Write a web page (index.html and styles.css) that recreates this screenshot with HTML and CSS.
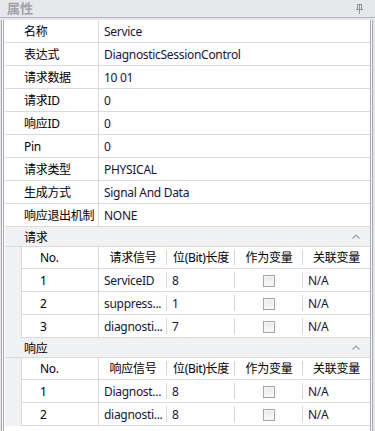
FILE: index.html
```html
<!DOCTYPE html>
<html lang="zh-CN">
<head>
    <meta charset="UTF-8">
    <meta name="viewport" content="width=device-width, initial-scale=1.0">
    <title>属性</title>
    <link rel="stylesheet" href="styles.css">
</head>
<body>
    <div class="titlebar">
        <span class="title">属性</span>
        <svg class="pin" width="7" height="10" viewBox="0 0 7 10">
            <rect x="1.5" y="0.5" width="4" height="5" fill="none" stroke="#8e9199"/>
            <rect x="3" y="1" width="1" height="4" fill="#8e9199"/>
            <rect x="0" y="5" width="7" height="1" fill="#8e9199"/>
            <rect x="3" y="6" width="1" height="4" fill="#8e9199"/>
        </svg>
    </div>
    <div class="panel">
        <div class="prop"><div class="label">名称</div><div class="value">Service</div></div>
        <div class="prop"><div class="label">表达式</div><div class="value">DiagnosticSessionControl</div></div>
        <div class="prop"><div class="label">请求数据</div><div class="value">10 01</div></div>
        <div class="prop"><div class="label">请求ID</div><div class="value">0</div></div>
        <div class="prop"><div class="label">响应ID</div><div class="value">0</div></div>
        <div class="prop"><div class="label">Pin</div><div class="value">0</div></div>
        <div class="prop"><div class="label">请求类型</div><div class="value">PHYSICAL</div></div>
        <div class="prop"><div class="label">生成方式</div><div class="value">Signal And Data</div></div>
        <div class="prop"><div class="label">响应退出机制</div><div class="value">NONE</div></div>

        <div class="section">
            <span>请求</span>
            <svg class="chevron" width="8" height="5" viewBox="0 0 8 5"><path d="M0.5 4.5 L4 1 L7.5 4.5" fill="none" stroke="#9a9ca2" stroke-width="1.2"/></svg>
        </div>
        <div class="indent">
            <div class="subtable">
                <div class="trow head">
                    <div class="cell no">No.</div>
                    <div class="cell sep">请求信号</div>
                    <div class="cell sep">位(Bit)长度</div>
                    <div class="cell sep">作为变量</div>
                    <div class="cell">关联变量</div>
                </div>
                <div class="trow">
                    <div class="cell no">1</div>
                    <div class="cell sep txt">ServiceID</div>
                    <div class="cell sep txt">8</div>
                    <div class="cell sep"><span class="check"></span></div>
                    <div class="cell txt">N/A</div>
                </div>
                <div class="trow">
                    <div class="cell no">2</div>
                    <div class="cell sep txt">suppress...</div>
                    <div class="cell sep txt">1</div>
                    <div class="cell sep"><span class="check"></span></div>
                    <div class="cell txt">N/A</div>
                </div>
                <div class="trow">
                    <div class="cell no">3</div>
                    <div class="cell sep txt">diagnosti...</div>
                    <div class="cell sep txt">7</div>
                    <div class="cell sep"><span class="check"></span></div>
                    <div class="cell txt">N/A</div>
                </div>
            </div>
        </div>

        <div class="section">
            <span>响应</span>
            <svg class="chevron" width="8" height="5" viewBox="0 0 8 5"><path d="M0.5 4.5 L4 1 L7.5 4.5" fill="none" stroke="#9a9ca2" stroke-width="1.2"/></svg>
        </div>
        <div class="indent">
            <div class="subtable">
                <div class="trow head">
                    <div class="cell no">No.</div>
                    <div class="cell sep">响应信号</div>
                    <div class="cell sep">位(Bit)长度</div>
                    <div class="cell sep">作为变量</div>
                    <div class="cell">关联变量</div>
                </div>
                <div class="trow">
                    <div class="cell no">1</div>
                    <div class="cell sep txt">Diagnost...</div>
                    <div class="cell sep txt">8</div>
                    <div class="cell sep"><span class="check"></span></div>
                    <div class="cell txt">N/A</div>
                </div>
                <div class="trow">
                    <div class="cell no">2</div>
                    <div class="cell sep txt">diagnosti...</div>
                    <div class="cell sep txt">8</div>
                    <div class="cell sep"><span class="check"></span></div>
                    <div class="cell txt">N/A</div>
                </div>
            </div>
        </div>
        <div class="filler"></div>
    </div>
</body>
</html>
```

FILE: styles.css
```css
body {
    margin: 0;
    background-color: #e6e7ea;
    font-family: "Noto Sans", "Noto Sans CJK SC", sans-serif;
    font-size: 12px;
    letter-spacing: -0.3px;
    color: #000;
    height: 431px;
    overflow: hidden;
}
.titlebar {
    height: 17px;
    display: flex;
    align-items: center;
    justify-content: space-between;
    padding: 0 12px 0 7px;
    background-color: #e6e7ea;
    border-bottom: 1px solid #b4b6bb;
}
.title {
    font-weight: bold;
    color: #a0a3aa;
    font-size: 13px;
    letter-spacing: 0;
    line-height: 17px;
}
.pin {
    display: block;
}
.panel {
    margin: 0 2px 0 1px;
    border-left: 3px double #a6a8ad;
    border-right: 3px double #a6a8ad;
    background-color: #fff;
    height: 420px;
}
.prop {
    display: flex;
    height: 22px;
    margin-left: 1px;
    border-bottom: 1px solid #dadada;
    line-height: 23px;
}
.prop:first-child {
    margin-top: 2px;
}
.label {
    width: 74px;
    padding-left: 19px;
    border-right: 1px solid #dadada;
    white-space: nowrap;
}
.value {
    padding-left: 5px;
    color: #15153a;
    white-space: nowrap;
}
.section {
    height: 19px;
    margin-left: 1px;
    display: flex;
    align-items: center;
    justify-content: space-between;
    padding: 0 10px 0 19px;
    background-color: #f0f1f3;
    border-bottom: 1px solid #dadada;
}
.chevron {
    display: block;
}
.indent {
    margin-left: 1px;
    padding-left: 16px;
    background-color: #f0f1f3;
}
.subtable {
    background-color: #fff;
    border-left: 1px solid #dadada;
}
.trow {
    display: grid;
    grid-template-columns: 77px 68px 68px 68px 1fr;
    height: 22px;
    border-bottom: 1px solid #dadada;
    line-height: 23px;
}
.trow.head {
    height: 21px;
    line-height: 22px;
}
.cell {
    white-space: nowrap;
    overflow: hidden;
}
.head .cell {
    text-align: center;
}
.head .cell.no {
    text-align: left;
}
.cell.no {
    padding-left: 18px;
    border-right: 1px solid #dadada;
}
.cell.sep {
    background: linear-gradient(#d4d4d4, #d4d4d4) right 3px / 1px calc(100% - 6px) no-repeat;
    text-align: center;
}
.cell.txt {
    text-align: left;
    padding-left: 5px;
    color: #15153a;
}
.check {
    display: inline-block;
    width: 10px;
    height: 10px;
    vertical-align: middle;
    margin-top: -2px;
    border: 1px solid #a4a6aa;
    background: linear-gradient(#e8e9eb, #fbfbfb);
    box-shadow: inset 0 0 0 1px #f7f7f7;
}
.filler {
    height: 8px;
}
```
